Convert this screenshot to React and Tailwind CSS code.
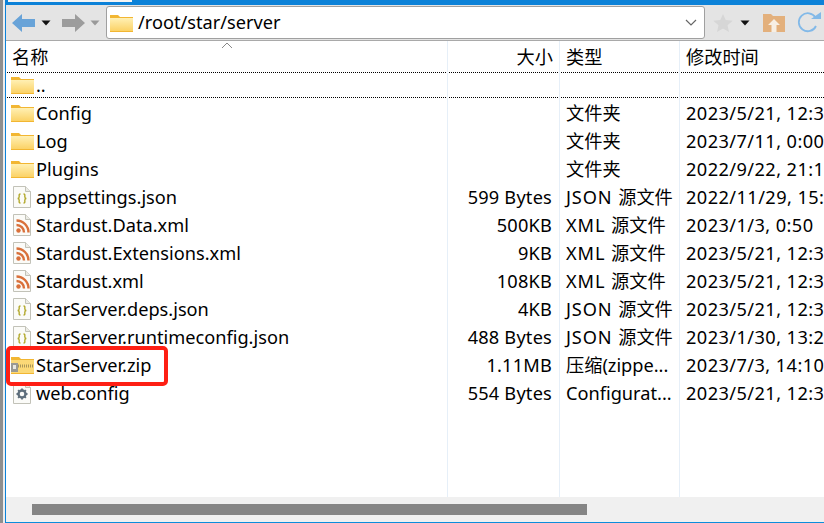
import React from "react";

function Folder() {
  return (
    <svg width="23" height="18" viewBox="0 0 23 18" className="shrink-0">
      <defs>
        <linearGradient id="fg" x1="0" y1="0" x2="0" y2="1">
          <stop offset="0" stopColor="#fff0b4" />
          <stop offset="1" stopColor="#fbd266" />
        </linearGradient>
      </defs>
      <path d="M0 1h8l2 2h13v15H0z" fill="#f2b632" />
      <rect x="0" y="4" width="23" height="13" fill="url(#fg)" />
    </svg>
  );
}

function ZipFolder() {
  return (
    <svg width="23" height="18" viewBox="0 0 23 18" className="shrink-0">
      <path d="M0 1h8l2 2h13v15H0z" fill="#f2b632" />
      <rect x="0" y="4" width="23" height="13" fill="#fbd977" />
      <path d="M7 10h16" stroke="#a99659" strokeWidth="3" strokeDasharray="1 1" />
      <rect x="0" y="7" width="7" height="9" fill="#9a9a94" />
      <rect x="2" y="9" width="3" height="4" fill="#e8e8e2" />
    </svg>
  );
}

function Page({ children }) {
  return (
    <svg width="18" height="22" viewBox="0 0 18 22" className="shrink-0">
      <path d="M.5.5h12l5 5v16H.5z" fill="#fbfbf8" stroke="#c2c2b8" />
      <path d="M12.500.5v5h5" fill="#ecece6" stroke="#c2c2b8" />
      {children}
    </svg>
  );
}

function JsonIcon() {
  return (
    <Page>
      <path d="M7.500 8c-1.800 0-1.300 1.500-1.300 2.800S5.500 12.500 4.600 12.500c.9 0 1.600.4 1.600 1.700S5.700 17 7.500 17" fill="none" stroke="#b3a92c" strokeWidth="1.400" />
      <path d="M10.500 8c1.800 0 1.300 1.500 1.300 2.800s.7 1.700 1.600 1.700c-.9 0-1.600.4-1.600 1.700s.5 2.800-1.300 2.800" fill="none" stroke="#b3a92c" strokeWidth="1.400" />
    </Page>
  );
}

function RssIcon() {
  return (
    <Page>
      <circle cx="5.500" cy="16.500" r="2.200" fill="#d9703a" />
      <path d="M3.500 11a7.500 7.500 0 0 1 7.500 7.500M3.500 6.500a12 12 0 0 1 12 12" fill="none" stroke="#d9703a" strokeWidth="2.400" />
    </Page>
  );
}

function GearIcon() {
  return (
    <Page>
      <circle cx="9" cy="12" r="3.500" fill="none" stroke="#5f6f7c" strokeWidth="2.400" />
      <path d="M9 6.500v2M9 15.500v2M3.500 12h2M12.500 12h2M5.100 8.100l1.400 1.400M11.500 14.500l1.400 1.400M5.100 15.900l1.400-1.400M11.500 9.500l1.400-1.400" stroke="#5f6f7c" strokeWidth="1.800" />
    </Page>
  );
}

const rows = [
  ["folder", "Config", "", "", "文件夹", "2023/5/21, 12:3"],
  ["folder", "Log", "", "", "文件夹", "2023/7/11, 0:00"],
  ["folder", "Plugins", "", "", "文件夹", "2022/9/22, 21:1"],
  ["json", "appsettings.json", "599 Bytes", "JSON ", "源文件", "2022/11/29, 15:"],
  ["rss", "Stardust.Data.xml", "500KB", "XML ", "源文件", "2023/1/3, 0:50"],
  ["rss", "Stardust.Extensions.xml", "9KB", "XML ", "源文件", "2023/5/21, 12:3"],
  ["rss", "Stardust.xml", "108KB", "XML ", "源文件", "2023/5/21, 12:3"],
  ["json", "StarServer.deps.json", "4KB", "JSON ", "源文件", "2023/5/21, 12:3"],
  ["json", "StarServer.runtimeconfig.json", "488 Bytes", "JSON ", "源文件", "2023/1/30, 13:2"],
  ["zip", "StarServer.zip", "1.11MB", "", "压缩(zippe...", "2023/7/3, 14:10"],
  ["gear", "web.config", "554 Bytes", "", "Configurat...", "2023/5/21, 12:3"],
];

function RowIcon({ type }) {
  const icon =
    type === "folder" ? <Folder /> :
    type === "json" ? <JsonIcon /> :
    type === "rss" ? <RssIcon /> :
    type === "zip" ? <ZipFolder /> : <GearIcon />;
  return <span className="flex h-6 w-[24px] shrink-0 items-center justify-center">{icon}</span>;
}

function Row({ row }) {
  const [type, name, size, prefix, kind, time] = row;
  return (
    <div className="flex h-7 items-center leading-7">
      <div className="flex w-[441px] shrink-0 items-center gap-[2px] pl-[4px]">
        <RowIcon type={type} />
        <span className="whitespace-nowrap">{name}</span>
      </div>
      <div className="w-[105px] shrink-0 whitespace-nowrap text-right tracking-[0.2px]">{size}</div>
      <div className="w-[127px] shrink-0 whitespace-pre pl-[14px]">
        <span className="tracking-[0.9px]">{prefix}</span>
        {kind}
      </div>
      <div className="flex-1 whitespace-nowrap pl-[7px] tracking-[0.42px]">{time}</div>
    </div>
  );
}

const Caret = ({ color, className }) => (
  <svg width="12" height="8" viewBox="0 0 12 8" className={`shrink-0 ${className}`}>
    <path d="M1.500 1.500h9L6 6.500z" fill={color} />
  </svg>
);

export default function App() {
  return (
    <div
      className="relative flex h-[523px] w-[824px] overflow-hidden bg-white text-[18.2px] text-black"
      style={{ fontFamily: '"Noto Sans", "Noto Sans CJK SC", sans-serif' }}
    >
      <div className="w-[3px] shrink-0 bg-[#8f8f8f]" />
      <div className="w-[2px] shrink-0 bg-[#ececec]" />
      <div className="flex min-w-0 flex-1 flex-col border-l border-[#0c82d8]">
        <div className="h-[5px] shrink-0 bg-[#0c82d8]" />
        {/* Toolbar */}
        <div className="flex h-[36px] shrink-0 items-center border-b border-[#a9a9a9] bg-[#e4e4e4] pl-[6px]">
          <svg width="23" height="18" viewBox="0 0 23 18" className="shrink-0">
            <path d="M0 9 10 0v5h13v8H10v5z" fill="#68a3d8" />
          </svg>
          <Caret color="#111" className="ml-[5px]" />
          <svg width="23" height="18" viewBox="0 0 23 18" className="ml-[10px] shrink-0">
            <path d="M23 9 13 0v5H0v8h13v5z" fill="#9c9c9c" />
          </svg>
          <Caret color="#999" className="ml-[4px]" />
          <div className="ml-[5px] flex h-[33px] w-[599px] shrink-0 items-center rounded-[3px] border border-[#a0a0a0] bg-white pl-[3px] pr-[6px]">
            <Folder />
            <span className="ml-[5px] flex-1 whitespace-nowrap pb-[2px] leading-7">/root/star/server</span>
            <svg width="14" height="10" viewBox="0 0 14 10" className="shrink-0">
              <path d="M2 2l5 5 5-5" fill="none" stroke="#666" strokeWidth="1.200" />
            </svg>
          </div>
          <svg width="20" height="18" viewBox="0 0 20 18" className="ml-[8px] shrink-0">
            <path d="M10 0l2.700 6 7 .7-5.200 4.500 1.500 6.800-6-3.500L4 18l1.500-6.800L.3 6.700 7.300 6z" fill="#d6d6d6" />
          </svg>
          <Caret color="#111" className="ml-[6px]" />
          <svg width="22" height="18" viewBox="0 0 22 18" className="ml-[12px] shrink-0">
            <path d="M0 0h8l2 2h12v16H0z" fill="#e3b07c" />
            <path d="M11 5l-6 6h3.500v7h5v-7H17z" fill="#f7efe4" />
          </svg>
          <svg width="27" height="22" viewBox="0 0 27 22" className="ml-[12px] shrink-0">
            <path d="M18.500 5.500A9 9 0 1 0 19 14" fill="none" stroke="#82b9e8" strokeWidth="1.800" />
            <path d="M14 7h10V0z" fill="#82b9e8" />
          </svg>
        </div>
        {/* List */}
        <div className="relative flex min-h-0 flex-1 flex-col">
          <svg width="14" height="8" viewBox="0 0 14 8" className="absolute left-[214px] top-[1px]">
            <path d="M2 6l5-5 5 5" fill="none" stroke="#888" />
          </svg>
          <div className="flex h-[31px] shrink-0 items-center leading-7">
            <div className="w-[441px] shrink-0 pl-[6px]">名称</div>
            <div className="w-[106px] shrink-0 text-right">大小</div>
            <div className="w-[126px] shrink-0 pl-[13px]">类型</div>
            <div className="flex-1 whitespace-nowrap pl-[7px]">修改时间</div>
          </div>
          <div className="ml-[1px] flex h-[26px] shrink-0 items-center gap-[2px] border-y border-dotted border-black pl-[3px] leading-6">
            <RowIcon type="folder" />
            <span>..</span>
          </div>
          <div className="flex-1 overflow-hidden pt-px">
            {rows.map((r) => <Row key={r[1]} row={r} />)}
          </div>
          {/* Column separators */}
          <div className="pointer-events-none absolute inset-y-0 left-[441px] w-px bg-[#e6eff8]" />
          <div className="pointer-events-none absolute inset-y-0 left-[553px] w-px bg-[#e6eff8]" />
          <div className="pointer-events-none absolute inset-y-0 left-[673px] w-px bg-[#e6eff8]" />
          {/* Annotation */}
          <div className="pointer-events-none absolute left-0 top-[305px] h-[40px] w-[162px] rounded-[5px] border-[4px] border-[#fe1f14]" />
        </div>
        {/* Scrollbar */}
        <div className="flex h-[25px] shrink-0 items-center bg-[#f0f0f0] pl-[26px]">
          <div className="h-[11px] w-[555px] bg-[#858585]" />
        </div>
        <div className="h-px shrink-0 bg-[#0c8ddb]" />
      </div>
      {/* Window behind the captured panel */}
      <div className="absolute left-[8px] top-0 h-[2px] w-[124px] bg-[#f4f4f4]" />
    </div>
  );
}
